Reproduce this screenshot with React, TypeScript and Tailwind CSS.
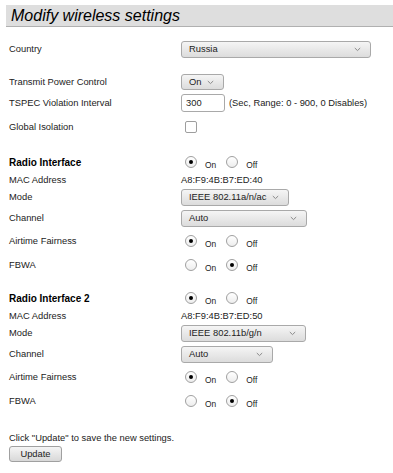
import React from "react";

const FONT = { fontFamily: '"Liberation Sans", Arial, sans-serif' };

function Chevron() {
  return (
    <svg width="7" height="5" viewBox="0 0 7 5" className="shrink-0">
      <path d="M0.8 1 L3.5 3.6 L6.2 1" fill="none" stroke="#8a8a8a" strokeWidth="1" />
    </svg>
  );
}

function Select({ text, className }: { text: string; className: string }) {
  return (
    <div
      className={
        "flex items-center justify-between rounded-[3px] border border-[#a9a9a9] bg-linear-to-b from-[#f5f5f5] to-[#dcdcdc] pl-[7px] pr-[9px] text-[9.4px] text-[#222] " +
        className
      }
    >
      <span>{text}</span>
      <Chevron />
    </div>
  );
}

function Radio({ checked }: { checked?: boolean }) {
  return (
    <span className="flex h-[12px] w-[12px] shrink-0 items-center justify-center rounded-full border border-[#a0a0a0] bg-linear-to-b from-white to-[#ededed]">
      {checked && <span className="h-[4px] w-[4px] rounded-full bg-black" />}
    </span>
  );
}

function RadioPair({ on }: { on: boolean }) {
  return (
    <div className="flex items-center">
      <span className="ml-[4px]">
        <Radio checked={on} />
      </span>
      <span className="ml-[8px] mt-[7px] text-[8.4px] text-[#222]">On</span>
      <span className="ml-[10px]">
        <Radio checked={!on} />
      </span>
      <span className="ml-[8px] mt-[7px] text-[8.4px] text-[#222]">Off</span>
    </div>
  );
}

function Row({
  label,
  bold,
  className,
  children,
}: {
  label: string;
  bold?: boolean;
  className: string;
  children?: React.ReactNode;
}) {
  return (
    <div className={"flex items-center " + className}>
      <div
        className={
          "w-[172px] shrink-0 " +
          (bold ? "text-[10px] font-bold text-black" : "text-[9.35px] text-[#222]")
        }
      >
        {label}
      </div>
      {children}
    </div>
  );
}

export default function App() {
  return (
    <div className="h-[473px] w-[393px] overflow-hidden bg-white" style={FONT}>
      <div className="pl-[6px] pt-[5px]">
        <div className="flex h-[22px] items-center border-b border-[#b0b0b0] bg-[#dedede] pl-[5px]">
          <span className="text-[16px] italic text-black">Modify wireless settings</span>
        </div>
      </div>

      <div className="pl-[9px]">
        <Row label="Country" className="mt-[14px] h-[17px]">
          <Select text="Russia" className="h-[17px] w-[190px]" />
        </Row>

        <Row label="Transmit Power Control" className="mt-[16px] h-[16px]">
          <Select text="On" className="h-[16px] w-[43px]" />
        </Row>

        <Row label="TSPEC Violation Interval" className="mt-[4px] h-[18px]">
          <div className="flex h-[18px] w-[44px] items-center rounded-[3px] border border-[#a9a9a9] bg-white pl-[4px] text-[9.35px] text-[#222]">
            300
          </div>
          <span className="ml-[4px] text-[9.35px] text-[#222]">(Sec, Range: 0 - 900, 0 Disables)</span>
        </Row>

        <Row label="Global Isolation" className="mt-[8px] h-[13px]">
          <span className="ml-[4px] h-[12px] w-[12px] rounded-[2px] border border-[#9e9e9e] bg-white" />
        </Row>

        {[
          { title: "Radio Interface", mac: "A8:F9:4B:B7:ED:40", mode: "IEEE 802.11a/n/ac", modeW: "w-[108px]", chW: "w-[126px]", top: "mt-[22px]" },
          { title: "Radio Interface 2", mac: "A8:F9:4B:B7:ED:50", mode: "IEEE 802.11b/g/n", modeW: "w-[125px]", chW: "w-[92px]", top: "mt-[19px]" },
        ].map((r) => (
          <div key={r.title}>
            <Row label={r.title} bold className={r.top + " h-[14px]"}>
              <RadioPair on />
            </Row>
            <Row label="MAC Address" className="mt-[5px] h-[12px]">
              <span className="text-[9.35px] text-[#222]">{r.mac}</span>
            </Row>
            <Row label="Mode" className="mt-[3px] h-[17px]">
              <Select text={r.mode} className={"h-[17px] " + r.modeW} />
            </Row>
            <Row label="Channel" className="mt-[4px] h-[17px]">
              <Select text="Auto" className={"h-[17px] " + r.chW} />
            </Row>
            <Row label="Airtime Fairness" className="mt-[7px] h-[14px]">
              <RadioPair on />
            </Row>
            <Row label="FBWA" className="mt-[10px] h-[14px]">
              <RadioPair on={false} />
            </Row>
          </div>
        ))}

        <div className="mt-[24px] flex h-[12px] items-center text-[9.35px] text-[#222]">
          Click "Update" to save the new settings.
        </div>
        <div className="mt-[2px] flex h-[16px] w-[53px] items-center justify-center rounded-[3px] border border-[#a0a0a0] bg-linear-to-b from-[#f5f5f5] to-[#d8d8d8] text-[9.35px] text-[#222]">
          Update
        </div>
      </div>
    </div>
  );
}
